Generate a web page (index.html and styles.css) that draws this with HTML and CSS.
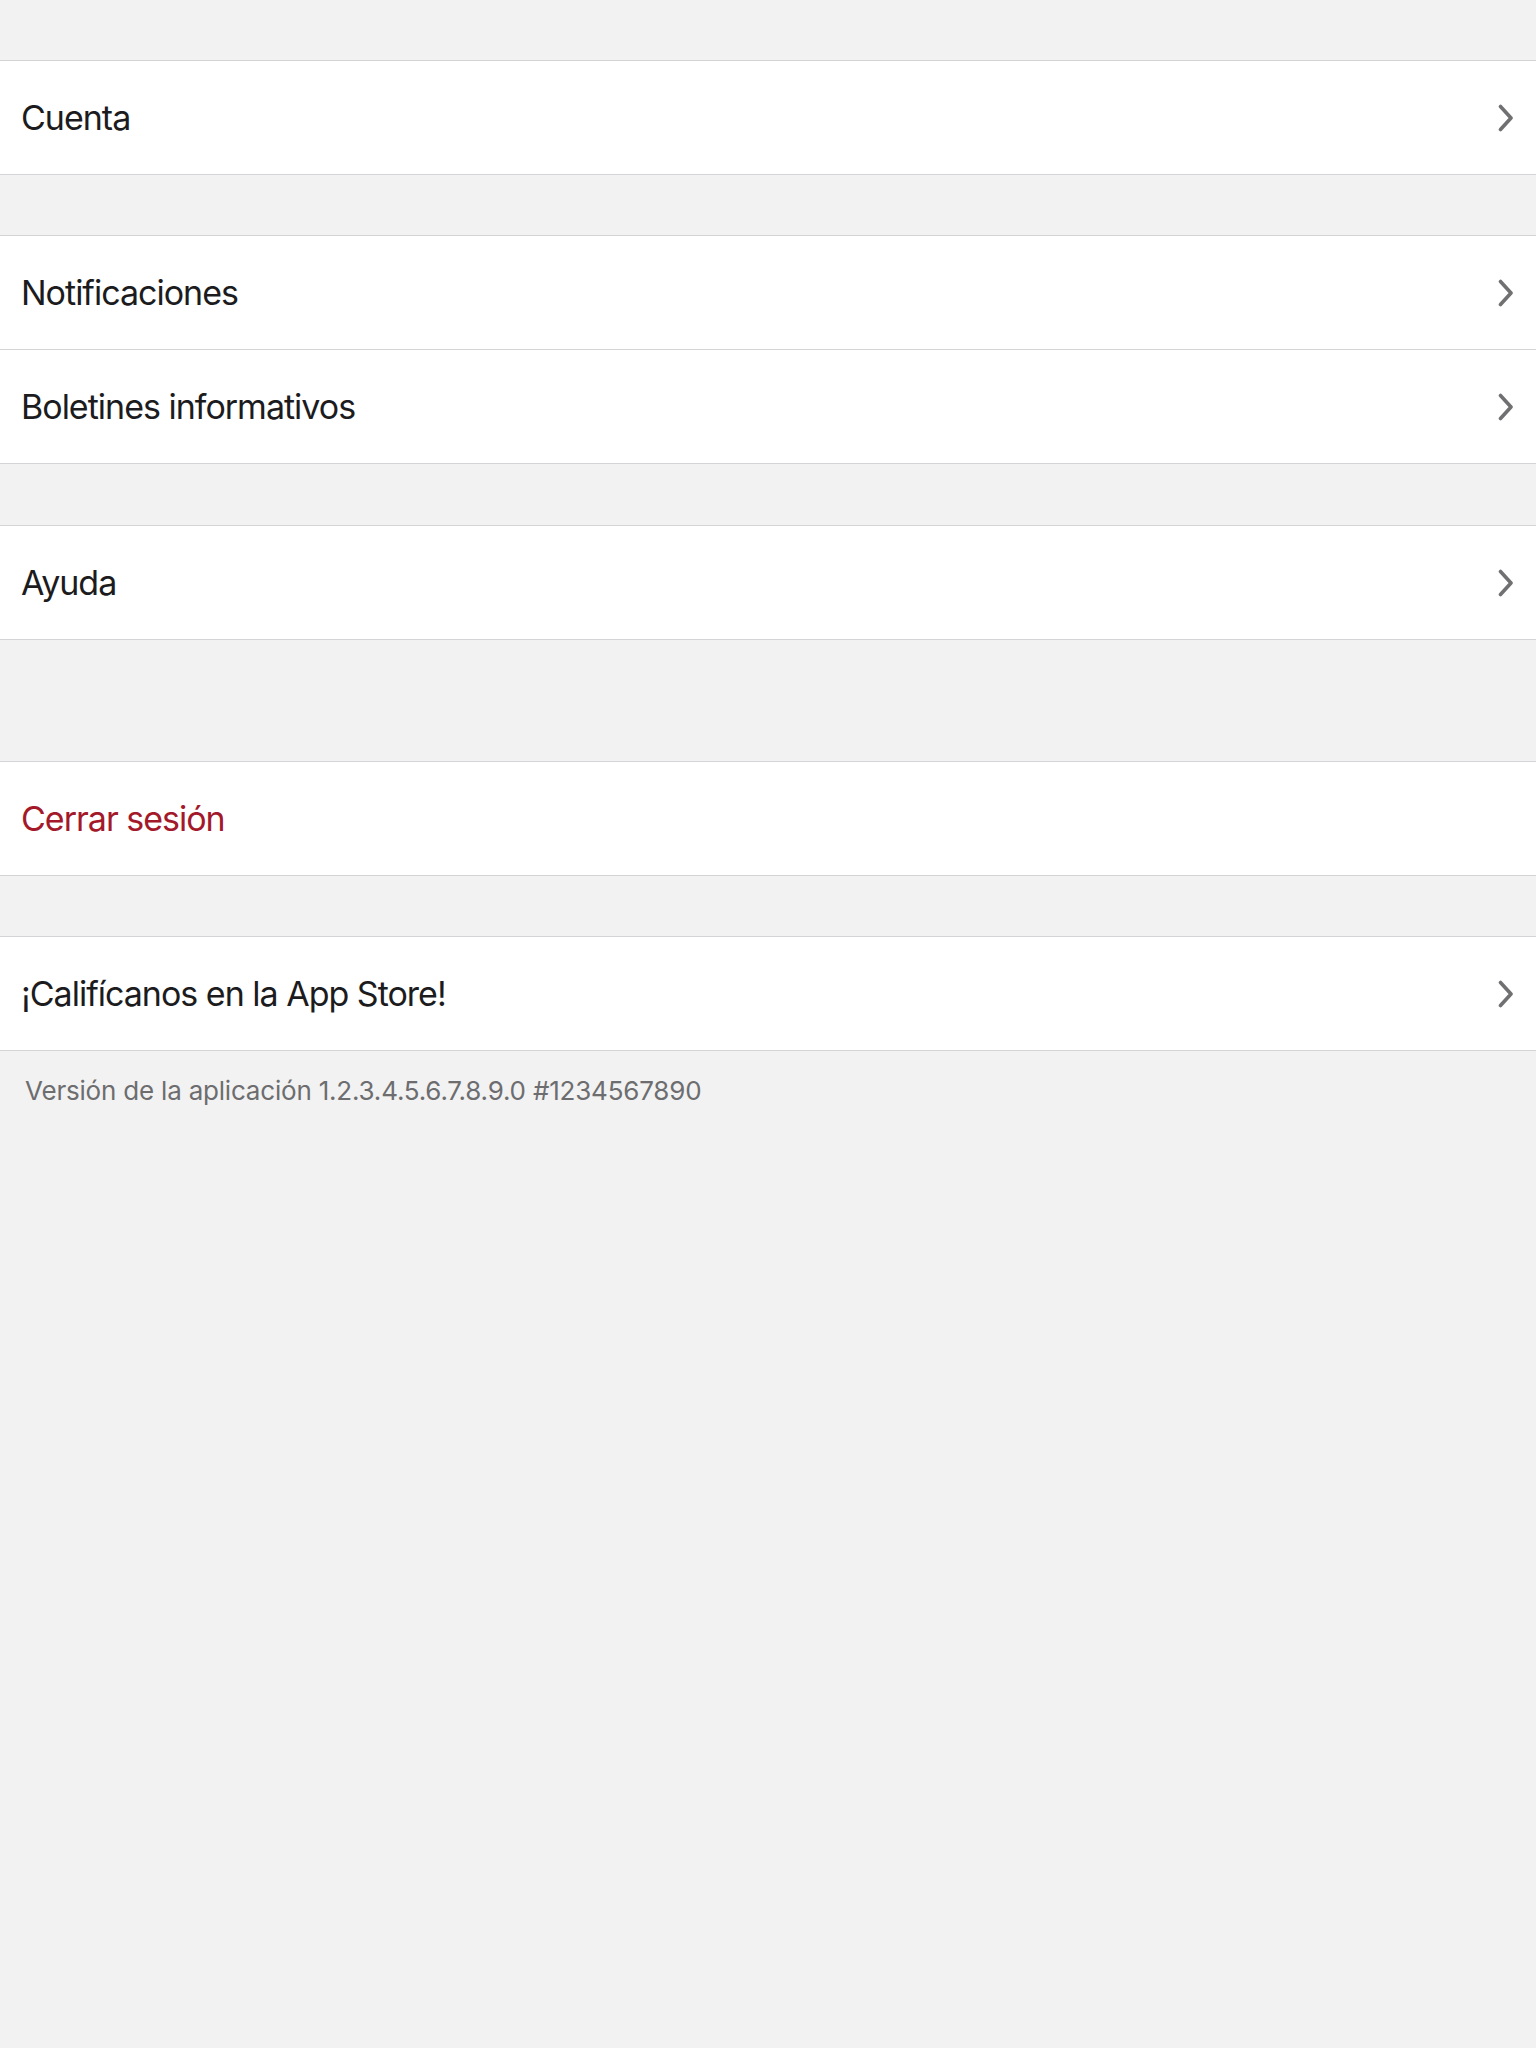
FILE: index.html
```html
<!DOCTYPE html>
<html lang="es">
<head>
<meta charset="utf-8">
<title>Ajustes</title>
<link rel="stylesheet" href="styles.css">
</head>
<body>
<main class="settings">
  <section class="group">
    <a class="row"><span class="label">Cuenta</span><svg class="chev" viewBox="0 0 16 28"><path d="M2.5 2.5 L13 14 L2.5 25.5"/></svg></a>
  </section>
  <section class="group">
    <a class="row"><span class="label">Notificaciones</span><svg class="chev" viewBox="0 0 16 28"><path d="M2.5 2.5 L13 14 L2.5 25.5"/></svg></a>
    <a class="row"><span class="label">Boletines informativos</span><svg class="chev" viewBox="0 0 16 28"><path d="M2.5 2.5 L13 14 L2.5 25.5"/></svg></a>
  </section>
  <section class="group group-after-pair">
    <a class="row"><span class="label">Ayuda</span><svg class="chev" viewBox="0 0 16 28"><path d="M2.5 2.5 L13 14 L2.5 25.5"/></svg></a>
  </section>
  <section class="group group-wide">
    <a class="row"><span class="label label-danger">Cerrar sesión</span></a>
  </section>
  <section class="group group-last">
    <a class="row"><span class="label">¡Califícanos en la App Store!</span><svg class="chev" viewBox="0 0 16 28"><path d="M2.5 2.5 L13 14 L2.5 25.5"/></svg></a>
  </section>
  <p class="version">Versión de la aplicación 1.2.3.4.5.6.7.8.9.0 #1234567890</p>
</main>
</body>
</html>
```

FILE: styles.css
```css
html, body {
  margin: 0;
  padding: 0;
  background: #f2f2f2;
}
body {
  font-family: "Inter", "Noto Sans", sans-serif;
  color: #1c1c1e;
}
.settings {
  padding-top: 60px;
}
.group {
  background: #ffffff;
  border-top: 1px solid #d4d4d6;
  margin-bottom: 60px;
}
.group-after-pair {
  margin-top: 61px;
}
.group-wide {
  margin-top: 121px;
}
.group-last {
  margin-bottom: 0;
}
.row {
  display: flex;
  align-items: center;
  justify-content: space-between;
  height: 113px;
  padding: 0 22px 0 21px;
  border-bottom: 1px solid #d4d4d6;
  box-sizing: content-box;
}
.label {
  font-size: 34px;
  letter-spacing: -1px;
}
.label-danger {
  color: #a3192a;
}
.chev {
  width: 16px;
  height: 28px;
  fill: none;
  stroke: #707072;
  stroke-width: 3.6;
  stroke-linecap: round;
  stroke-linejoin: round;
}
.version {
  margin: 24px 0 0 25px;
  font-size: 26px;
  line-height: 32px;
  letter-spacing: -0.2px;
  color: #6d6d70;
}
```
